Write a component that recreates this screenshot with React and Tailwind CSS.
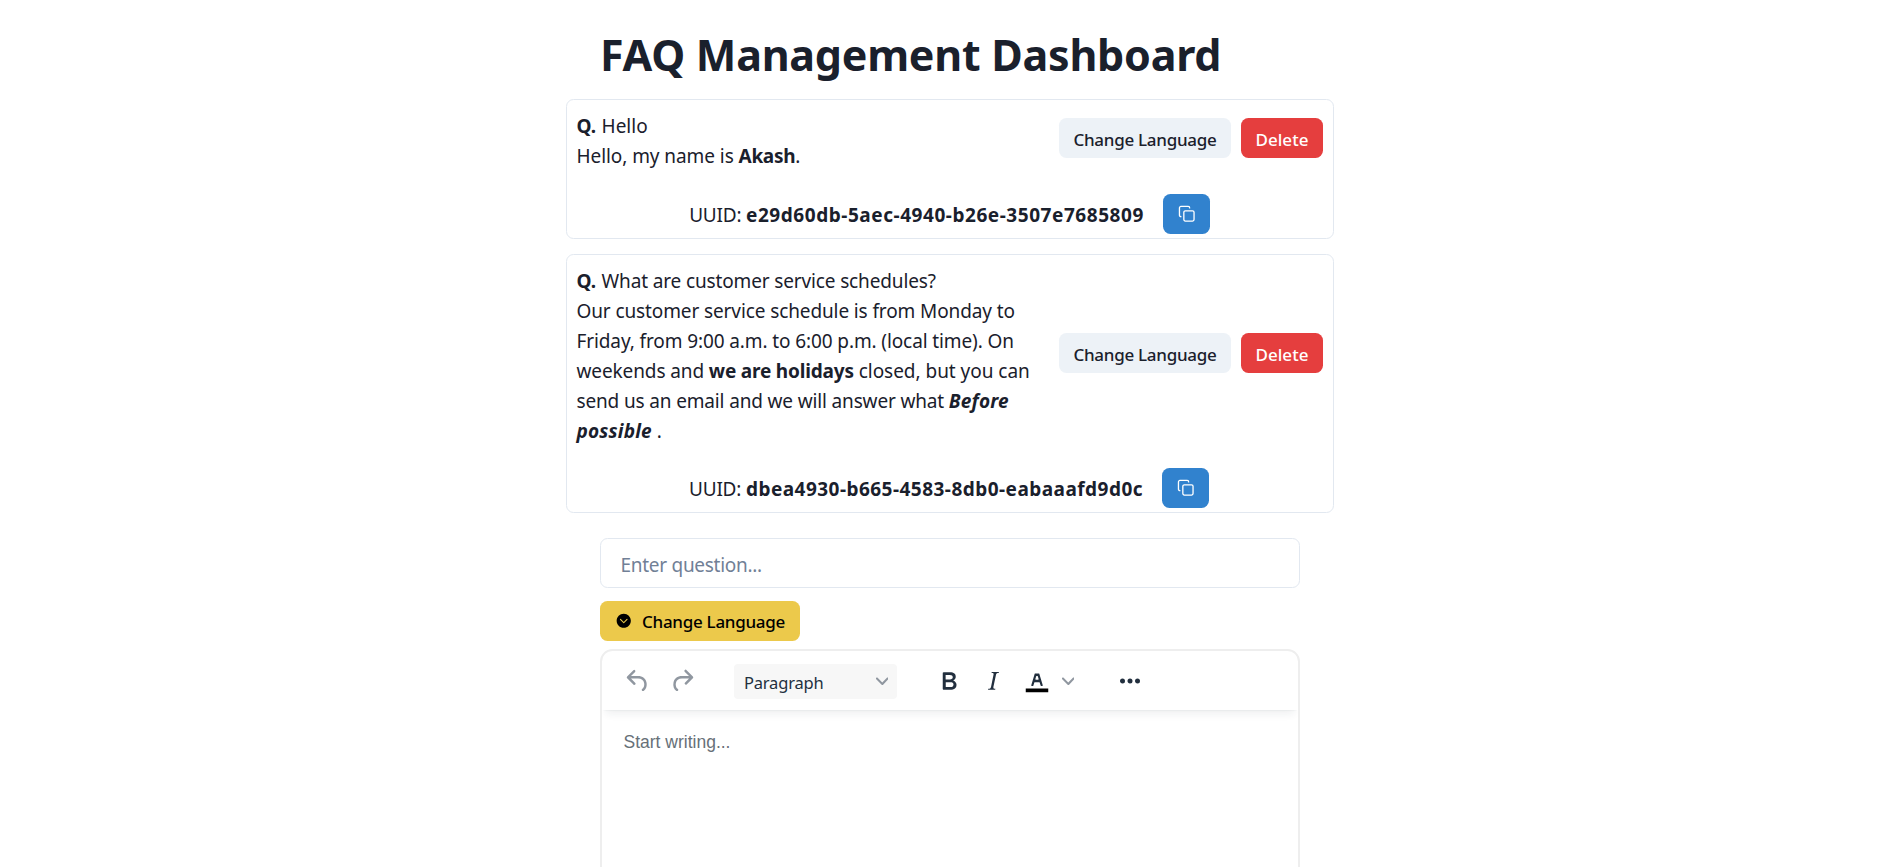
import { Copy } from 'lucide-react';
import { IoChevronDownCircle } from 'react-icons/io5';

const iconPaths = {
  undo: 'M6.4 8H12c3.7 0 6.2 2 6.8 5.1.6 2.7-.4 5.6-2.3 6.8a1 1 0 0 1-1-1.8c1.1-.6 1.8-2.7 1.4-4.6-.5-2.1-2.1-3.5-4.9-3.5H6.4l3.3 3.3a1 1 0 1 1-1.4 1.4l-5-5a1 1 0 0 1 0-1.4l5-5a1 1 0 0 1 1.4 1.4L6.4 8Z',
  redo: 'M17.6 10H12c-2.8 0-4.4 1.4-4.9 3.5-.4 2 .3 4 1.4 4.6a1 1 0 1 1-1 1.8c-2-1.2-2.9-4.1-2.3-6.8.6-3 3-5.1 6.8-5.1h5.6l-3.3-3.3a1 1 0 1 1 1.4-1.4l5 5a1 1 0 0 1 0 1.4l-5 5a1 1 0 0 1-1.4-1.4l3.3-3.3Z',
  bold: 'M7.8 19c-.3 0-.5 0-.6-.2l-.2-.5V5.7c0-.2 0-.4.2-.5l.6-.2h5c1.5 0 2.7.3 3.5 1 .7.6 1.1 1.4 1.1 2.5a3 3 0 0 1-.6 1.9c-.4.6-1 1-1.6 1.2.4.1.9.3 1.3.6s.8.7 1 1.2c.4.4.5 1 .5 1.6 0 1.3-.4 2.3-1.3 3-.8.7-2.1 1-3.8 1H7.8Zm5-8.3c.6 0 1.2-.1 1.6-.5.4-.3.6-.7.6-1.3 0-1.1-.8-1.7-2.3-1.7H9.3v3.5h3.4Zm.5 6c.7 0 1.3-.1 1.7-.4.4-.4.6-.9.6-1.5s-.2-1-.7-1.4c-.4-.3-1-.4-2-.4H9.4v3.8h4Z',
  italic: 'm16.7 4.7-.1.9h-.3c-.6 0-1 0-1.4.3-.3.3-.4.6-.5 1.1l-2.1 9.8v.6c0 .5.4.8 1.4.8h.2l-.2.8H8l.2-.8h.2c1.1 0 1.8-.5 2-1.5l2-9.8.1-.5c0-.6-.4-.8-1.4-.8h-.3l.2-.9h5.8Z',
  color: 'M8.7 16h-.8a.5.5 0 0 1-.5-.6l2.7-9c.1-.3.3-.4.5-.4h2.8c.2 0 .4.1.5.4l2.7 9a.5.5 0 0 1-.5.6h-.8a.5.5 0 0 1-.4-.4l-.7-2.2c0-.3-.3-.4-.5-.4h-3.4c-.2 0-.4.1-.5.4l-.7 2.2c0 .3-.2.4-.4.4Zm2.6-7.6-.6 2a.5.5 0 0 0 .5.6h1.6a.5.5 0 0 0 .5-.6l-.6-2c0-.3-.3-.4-.5-.4h-.4c-.2 0-.4.1-.5.4Z',
  more: 'M6 10a2 2 0 0 0-2 2c0 1.1.9 2 2 2a2 2 0 0 0 2-2 2 2 0 0 0-2-2Zm12 0a2 2 0 0 0-2 2c0 1.1.9 2 2 2a2 2 0 0 0 2-2 2 2 0 0 0-2-2Zm-6 0a2 2 0 0 0-2 2c0 1.1.9 2 2 2a2 2 0 0 0 2-2 2 2 0 0 0-2-2Z',
};

function ToolIcon({ name, className, children }) {
  return (
    <svg viewBox="0 0 24 24" className={`size-[30px] shrink-0 fill-current ${className}`}>
      {children}
      <path fillRule="evenodd" d={iconPaths[name]} />
    </svg>
  );
}

function Chevron({ className }) {
  return (
    <svg viewBox="0 0 10 10" className={`size-[12.5px] shrink-0 fill-[#9097a0] ${className}`}>
      <path d="M8.7 2.2c.3-.3.8-.3 1 0 .4.4.4.9 0 1.2L5.7 7.8c-.3.3-.9.3-1.2 0L.2 3.4a.8.8 0 0 1 0-1.2c.3-.3.8-.3 1.1 0L5 6l3.7-3.8Z" />
    </svg>
  );
}

function FaqCard({ className, uuid, uuidClass, rowClass, children }) {
  return (
    <article className={`w-[768px] rounded-[7.5px] border border-[#e2e8f0] px-[10px] pt-[11px] pb-1 ${className}`}>
      <div className="flex items-center justify-between">
        <div className="-ml-[0.5px] whitespace-nowrap">{children}</div>
        <div className="mb-1.5 flex gap-[10px] text-[17px] font-medium">
          <button className="h-10 w-[172px] rounded-[7.5px] bg-[#edf2f7] pt-[3px] tracking-[-0.28px]">Change Language</button>
          <button className="h-10 w-[82px] rounded-[7.5px] bg-[#e53e3e] pt-[3px] text-white">Delete</button>
        </div>
      </div>
      <div className={`flex items-center justify-center ${rowClass}`}>
        <p className="pt-0.5 whitespace-pre">
          <span className="tracking-[-0.2px]">UUID: </span>
          <strong className={uuidClass}>{uuid}</strong>
        </p>
        <button className="ml-[19px] flex h-10 w-[47px] items-center justify-center rounded-[7.5px] bg-[#3182ce]">
          <Copy size={17.5} strokeWidth={1.8} className="text-white" />
        </button>
      </div>
    </article>
  );
}

export default function App() {
  return (
    <div className="h-screen overflow-hidden bg-white pl-[3px] font-['Noto_Sans',sans-serif] text-[19px] leading-[30px] text-[#1a202c]">
      <div className="mx-auto flex w-[768px] flex-col items-center">
        <h1 className="mt-[28px] h-[71px] w-[700px] text-[43px] leading-[54px] font-bold tracking-[-0.25px]">FAQ Management Dashboard</h1>

        <FaqCard
          className="h-[140px]"
          uuid="e29d60db-5aec-4940-b26e-3507e7685809"
          uuidClass="tracking-[0.55px]"
          rowClass="mt-[23px] pr-[1px]"
        >
          <p><strong>Q.</strong> <span className="ml-[0.5px]">Hello</span></p>
          <p className="tracking-[-0.07px]">Hello, my name is <strong className="tracking-[-0.3px]">Akash</strong>.</p>
        </FaqCard>

        <FaqCard
          className="mt-[15px] h-[259px]"
          uuid="dbea4930-b665-4583-8db0-eabaaafd9d0c"
          uuidClass="tracking-[0.47px]"
          rowClass="mt-[22px] pr-[2px]"
        >
          <p><strong>Q.</strong> <span className="ml-[0.5px] tracking-[-0.14px]">What are customer service schedules?</span></p>
          <p className="tracking-[-0.11px]">
            Our customer service schedule is from Monday to<br />
            Friday, from 9:00 a.m. to 6:00 p.m. (local time). On<br />
            weekends and <strong className="tracking-[-0.18px]">we are holidays</strong><span className="tracking-[-0.03px]"> closed, but you can</span><br />
            <span className="tracking-[-0.15px]">send us an email and we will answer what </span>
            <strong className="tracking-[0.2px] italic">Before<br />possible</strong> .
          </p>
        </FaqCard>

        <input
          placeholder="Enter question..."
          className="mt-[25px] h-[50px] w-[700px] rounded-[7.5px] border border-[#e2e8f0] px-[19.5px] pt-1 tracking-[-0.28px] outline-none placeholder:text-[#718096]"
        />
        <button className="mt-[13px] ml-[34px] flex h-10 w-[200px] items-center self-start rounded-[7.5px] bg-[#ecc94b] pl-[15px] text-[17px] font-medium tracking-[-0.28px] text-black">
          <IoChevronDownCircle className="mr-[9.5px] size-[17.5px]" />
          <span className="pt-0.5">Change Language</span>
        </button>

        <section className="mt-2 h-[500px] w-[700px] shrink-0 overflow-hidden rounded-[12.5px] border-2 border-[#eeeeee]">
          <div className="flex h-[59px] items-center pt-[1.5px] text-[#222f3e] shadow-[0_2px_2px_-2px_rgba(34,47,62,.1),0_8px_8px_-4px_rgba(34,47,62,.07)]">
            <ToolIcon name="undo" className="ml-[21px] text-[#9097a0]" />
            <ToolIcon name="redo" className="ml-[13.5px] text-[#9097a0]" />
            <button className="ml-[37.5px] flex h-[35px] w-[163px] items-center justify-between rounded-[4px] bg-[#f7f7f7] pr-[9px] pl-[10px] text-[16.5px] tracking-[-0.2px]">
              <span className="pt-1">Paragraph</span>
              <Chevron />
            </button>
            <ToolIcon name="bold" className="ml-[36.5px]" />
            <ToolIcon name="italic" className="ml-[14px]" />
            <ToolIcon name="color" className="ml-[14.5px]">
              <path d="M3 18h18v3H3z" className="fill-black" />
            </ToolIcon>
            <Chevron className="ml-[9.5px]" />
            <ToolIcon name="more" className="ml-[40.5px]" />
          </div>
          <p className="mt-[17px] pl-[21.5px] font-['Liberation_Sans',sans-serif] text-[17.5px] text-[#677078]">Start writing...</p>
        </section>
      </div>
    </div>
  );
}
